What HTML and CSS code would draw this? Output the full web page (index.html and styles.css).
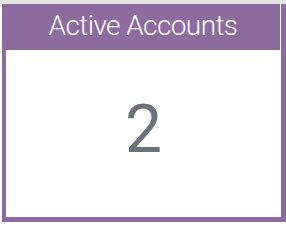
FILE: index.html
```
<!DOCTYPE html>
<html>
<head>
<meta charset="utf-8">
<link rel="stylesheet" href="styles.css">
</head>
<body>
<div class="band"></div>
<div class="card">
  <div class="card-header">Active Accounts</div>
  <div class="card-body">2</div>
</div>
</body>
</html>
```
FILE: styles.css
```
html, body {
  margin: 0;
  padding: 0;
  background: #ffffff;
}
.band {
  height: 4px;
  background: #e4e4e4;
}
.card {
  margin-left: 2px;
  width: 275px;
  height: 213px;
  border-left: 4px solid #8d6b9f;
  border-right: 5px solid #8d6b9f;
  border-bottom: 5px solid #8d6b9f;
  box-shadow: 0 1px 0 #d9cce0;
  display: flex;
  flex-direction: column;
  background: #ffffff;
}
.card-header {
  height: 46px;
  margin-right: 1px;
  background: #8d6b9f;
  color: #ffffff;
  font-family: Roboto, "Liberation Sans", sans-serif;
  font-weight: 300;
  font-size: 28px;
  letter-spacing: -0.6px;
  display: flex;
  align-items: center;
  justify-content: center;
  padding-bottom: 3px;
  box-sizing: border-box;
}
.card-body {
  flex: 1;
  display: flex;
  align-items: center;
  justify-content: center;
  font-family: Roboto, "Liberation Sans", sans-serif;
  font-weight: 400;
  font-size: 66px;
  color: #6c727a;
  padding-bottom: 8px;
}
```
